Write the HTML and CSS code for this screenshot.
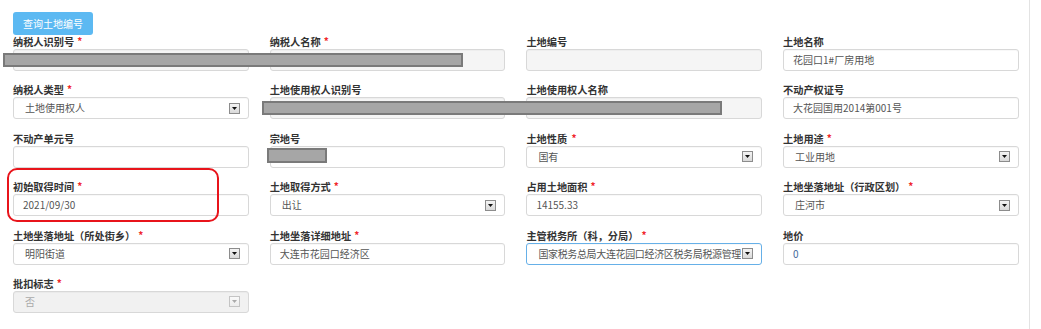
FILE: index.html
```html
<!DOCTYPE html>
<html lang="zh-CN">
<head>
<meta charset="utf-8">
<title>土地信息</title>
<link rel="stylesheet" href="styles.css">
</head>
<body>
<div class="page">
  <div class="toolbar"><button class="btn" type="button">查询土地编号</button></div>
  <div class="grid">
    <div class="field"><div class="lbl">纳税人识别号<i class="req">*</i></div><div class="ctl ro"></div></div>
    <div class="field"><div class="lbl">纳税人名称<i class="req">*</i></div><div class="ctl ro"></div></div>
    <div class="field"><div class="lbl">土地编号</div><div class="ctl ro"></div></div>
    <div class="field"><div class="lbl">土地名称</div><div class="ctl">花园口1#厂房用地</div></div>

    <div class="field"><div class="lbl">纳税人类型<i class="req">*</i></div><div class="ctl sel"><span class="val">土地使用权人</span><span class="arr"><svg width="5" height="3" viewBox="0 0 5 3"><path d="M0 0H5L2.5 3Z" fill="#111"/></svg></span></div></div>
    <div class="field"><div class="lbl">土地使用权人识别号</div><div class="ctl ro"></div></div>
    <div class="field"><div class="lbl">土地使用权人名称</div><div class="ctl ro"></div></div>
    <div class="field"><div class="lbl">不动产权证号</div><div class="ctl">大花园国用2014第001号</div></div>

    <div class="field"><div class="lbl">不动产单元号</div><div class="ctl"></div></div>
    <div class="field"><div class="lbl">宗地号</div><div class="ctl"></div></div>
    <div class="field"><div class="lbl">土地性质 <i class="req sp">*</i></div><div class="ctl sel"><span class="val">国有</span><span class="arr"><svg width="5" height="3" viewBox="0 0 5 3"><path d="M0 0H5L2.5 3Z" fill="#111"/></svg></span></div></div>
    <div class="field"><div class="lbl">土地用途<i class="req">*</i></div><div class="ctl sel"><span class="val">工业用地</span><span class="arr"><svg width="5" height="3" viewBox="0 0 5 3"><path d="M0 0H5L2.5 3Z" fill="#111"/></svg></span></div></div>

    <div class="field"><div class="lbl">初始取得时间<i class="req">*</i></div><div class="ctl">2021/09/30</div></div>
    <div class="field"><div class="lbl">土地取得方式<i class="req">*</i></div><div class="ctl sel"><span class="val">出让</span><span class="arr"><svg width="5" height="3" viewBox="0 0 5 3"><path d="M0 0H5L2.5 3Z" fill="#111"/></svg></span></div></div>
    <div class="field"><div class="lbl">占用土地面积<i class="req">*</i></div><div class="ctl">14155.33</div></div>
    <div class="field"><div class="lbl">土地坐落地址（行政区划）<i class="req">*</i></div><div class="ctl sel"><span class="val">庄河市</span><span class="arr"><svg width="5" height="3" viewBox="0 0 5 3"><path d="M0 0H5L2.5 3Z" fill="#111"/></svg></span></div></div>

    <div class="field"><div class="lbl">土地坐落地址（所处街乡）<i class="req">*</i></div><div class="ctl sel"><span class="val">明阳街道</span><span class="arr"><svg width="5" height="3" viewBox="0 0 5 3"><path d="M0 0H5L2.5 3Z" fill="#111"/></svg></span></div></div>
    <div class="field"><div class="lbl">土地坐落详细地址<i class="req">*</i></div><div class="ctl">大连市花园口经济区</div></div>
    <div class="field"><div class="lbl">主管税务所（科，分局）<i class="req">*</i></div><div class="ctl sel focus"><span class="val tight">国家税务总局大连花园口经济区税务局税源管理</span><span class="arr"><svg width="5" height="3" viewBox="0 0 5 3"><path d="M0 0H5L2.5 3Z" fill="#111"/></svg></span></div></div>
    <div class="field"><div class="lbl">地价</div><div class="ctl num">0</div></div>

    <div class="field"><div class="lbl">批扣标志<i class="req">*</i></div><div class="ctl sel dis"><span class="val">否</span><span class="arr"><svg width="5" height="3" viewBox="0 0 5 3"><path d="M0 0H5L2.5 3Z" fill="#aaa"/></svg></span></div></div>
  </div>

  <div class="redact r1"></div>
  <div class="redact r2"></div>
  <div class="redact r3"></div>
  <div class="mark"></div>
</div>
</body>
</html>
```

FILE: styles.css
```css
html, body {
  margin: 0;
  padding: 0;
  background: #fff;
}
body {
  font-family: "Noto Sans CJK SC", "Liberation Sans", sans-serif;
  color: #333;
  width: 1041px;
  height: 329px;
  overflow: hidden;
}
.page {
  position: relative;
  width: 1030px;
  height: 329px;
  padding: 9px 0 0 13px;
  box-sizing: border-box;
  border-right: 1px solid #e3e3e3;
}
.toolbar {
  height: 23px;
  margin-bottom: 3px;
}
.btn {
  width: 80px;
  height: 23px;
  border: 0;
  border-radius: 3px;
  background: #5cb9f2;
  color: #fff;
  font-family: "Noto Sans CJK SC", sans-serif;
  font-size: 10px;
  padding: 0;
  line-height: 23px;
}
.grid {
  display: grid;
  grid-template-columns: repeat(4, 235.5px);
  column-gap: 21.2px;
  row-gap: 12.4px;
}
.field {
  height: 36px;
  display: flex;
  flex-direction: column;
}
.lbl {
  height: 14px;
  line-height: 14px;
  font-size: 10.2px;
  font-weight: bold;
  color: #333;
  white-space: nowrap;
}
.req {
  font-style: normal;
  color: #f0262b;
  font-size: 10px;
  margin-left: 3px;
  position: relative;
  top: -1px;
}
.req.sp {
  margin-left: 2px;
}
.ctl {
  height: 22px;
  box-sizing: border-box;
  border: 1px solid #d8d8d8;
  border-radius: 3px;
  background: #fff;
  font-size: 10px;
  line-height: 20px;
  color: #555;
  padding: 0 9px;
  white-space: nowrap;
  overflow: hidden;
  box-shadow: inset 0 1px 1px rgba(0,0,0,0.03);
}
.ctl.ro {
  background: #f5f5f5;
}
.ctl.num {
  color: #44679b;
}
.ctl.sel {
  display: flex;
  align-items: center;
  padding: 0 8px 0 11px;
}
.sel .val {
  flex: 1;
  overflow: hidden;
  white-space: nowrap;
}
.sel .val.tight {
  letter-spacing: -0.35px;
}
.arr {
  width: 11px;
  height: 11px;
  box-sizing: border-box;
  border: 1px solid #8c8c8c;
  background: linear-gradient(#f4f4f4, #d9d9d9);
  display: flex;
  align-items: center;
  justify-content: center;
  flex: none;
  margin-left: 1px;
}
.ctl.focus {
  border-color: #66b0e8;
}
.ctl.dis {
  background: #f1f1f1;
  color: #aaa;
}
.ctl.dis .arr {
  border-color: #c4c4c4;
  background: linear-gradient(#fafafa, #ececec);
}
.redact {
  position: absolute;
  box-sizing: border-box;
  background: #a6a6a6;
  border: 2px solid #7a7a7a;
}
.r1 { left: 3px; top: 53px; width: 460px; height: 14px; }
.r2 { left: 262px; top: 101px; width: 460px; height: 14px; }
.r3 { left: 267px; top: 148px; width: 60px; height: 15px; }
.mark {
  position: absolute;
  left: 7px;
  top: 168px;
  width: 212px;
  height: 54px;
  box-sizing: border-box;
  border: 2px solid #e8141b;
  border-radius: 10px;
}
```
